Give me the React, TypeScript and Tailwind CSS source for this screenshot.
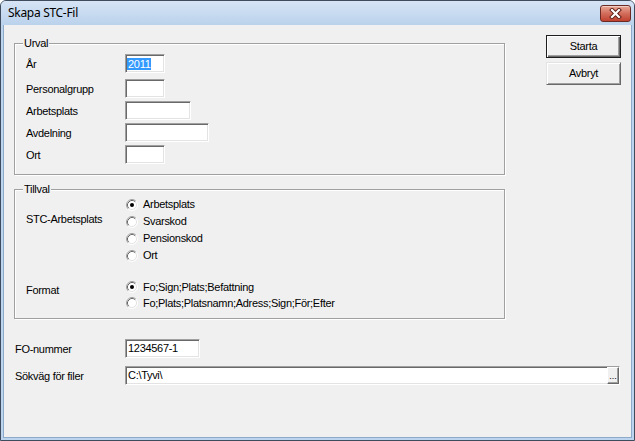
import React from "react";

const txt = "font-['Liberation_Sans',Arial,sans-serif] text-[11px] tracking-[-0.3px] leading-[13px] text-black";

function Sunken({ w, children }: { w: string; children?: React.ReactNode }) {
  return (
    <div
      className={`${w} h-[19px] bg-white border border-t-[#a0a0a0] border-l-[#a0a0a0] border-b-white border-r-white shadow-[inset_1px_1px_0_#696969,inset_-1px_-1px_0_#e3e3e3] flex items-center pl-[2px] overflow-hidden`}
    >
      {children}
    </div>
  );
}

function RadioIcon({ checked }: { checked?: boolean }) {
  return (
    <svg width="12" height="12" viewBox="0 0 12 12" className="shrink-0">
      <circle cx="6" cy="6" r="5" fill="#ffffff" />
      <path d="M2.11 9.89 A5.5 5.5 0 0 1 9.89 2.11" fill="none" stroke="#a0a0a0" />
      <path d="M9.89 2.11 A5.5 5.5 0 0 1 2.11 9.89" fill="none" stroke="#ffffff" />
      <path d="M2.82 9.18 A4.5 4.5 0 0 1 9.18 2.82" fill="none" stroke="#696969" />
      <path d="M9.18 2.82 A4.5 4.5 0 0 1 2.82 9.18" fill="none" stroke="#e3e3e3" />
      {checked && <circle cx="6" cy="6" r="2" fill="#000000" />}
    </svg>
  );
}

function Radio({ label, checked, h }: { label: string; checked?: boolean; h: string }) {
  return (
    <div className={`${h} flex items-center pl-[1px]`}>
      <RadioIcon checked={checked} />
      <span className="ml-[5px] whitespace-nowrap">{label}</span>
    </div>
  );
}

function Group({ title, h, children }: { title: string; h: string; children: React.ReactNode }) {
  return (
    <div
      className={`relative ${h} border border-[#a0a0a0] shadow-[inset_1px_1px_0_#ffffff,1px_1px_0_#ffffff]`}
    >
      <span className="absolute -top-[7px] left-[8px] px-[1px] bg-[#f0f0f0] leading-[13px]">{title}</span>
      {children}
    </div>
  );
}

function FieldRow({ label, children, mt }: { label: string; children: React.ReactNode; mt: string }) {
  return (
    <div className={`flex items-center ${mt}`}>
      <div className="w-[99px] pt-[2px]">{label}</div>
      {children}
    </div>
  );
}

export default function App() {
  return (
    <div className="w-[635px] h-[441px] bg-white">
      <div className="w-[635px] h-[441px] rounded-t-[6px] border border-[#3e4c5e] bg-[#bcd4ee] flex flex-col overflow-hidden">
        {/* title bar */}
        <div className="h-[24px] shrink-0 flex items-start justify-between bg-linear-to-b from-[#d6e4f5] to-[#bad2ec] pl-[7px] pr-[3px]">
          <span className="mt-[4px] font-['Noto_Sans',sans-serif] text-[12px] leading-[16px] tracking-[-0.3px] text-black">
            Skapa STC-Fil
          </span>
          <div className="mt-[4px] w-[31px] h-[17px] rounded-[3px] border border-[#6b2a23] bg-linear-to-b from-[#e8a796] via-[#d26d5c] to-[#c0402f] shadow-[inset_0_1px_0_rgba(255,255,255,0.45)] flex items-center justify-center">
            <svg width="13" height="11" viewBox="0 0 13 11">
              <path d="M3 2 L10 9 M10 2 L3 9" stroke="#5a1a12" strokeWidth="4" strokeLinecap="square" fill="none" />
              <path d="M3 2 L10 9 M10 2 L3 9" stroke="#ffffff" strokeWidth="2.2" strokeLinecap="square" fill="none" />
            </svg>
          </div>
        </div>

        {/* client area */}
        <div className={`flex-1 mx-[2px] mb-[2px] border-l border-r border-b border-[#8eaacb] bg-[#f0f0f0] pt-[10px] ${txt}`}>
          <div className="flex items-start pl-[10px]">
            {/* left column */}
            <div className="w-[491px] mt-[8px] flex flex-col">
              <Group title="Urval" h="h-[132px]">
                <div className="pl-[11px] pt-[10px] flex flex-col">
                  <FieldRow label="År" mt="mt-0">
                    <Sunken w="w-[40px]">
                      <span className="-ml-[1px] px-[1px] bg-[#3399ff] text-white leading-[12px]">2011</span>
                    </Sunken>
                  </FieldRow>
                  <FieldRow label="Personalgrupp" mt="mt-[6px]">
                    <Sunken w="w-[40px]" />
                  </FieldRow>
                  <FieldRow label="Arbetsplats" mt="mt-[3px]">
                    <Sunken w="w-[66px]" />
                  </FieldRow>
                  <FieldRow label="Avdelning" mt="mt-[3px]">
                    <Sunken w="w-[84px]" />
                  </FieldRow>
                  <FieldRow label="Ort" mt="mt-[3px]">
                    <Sunken w="w-[40px]" />
                  </FieldRow>
                </div>
              </Group>

              <div className="mt-[14px]">
                <Group title="Tillval" h="h-[130px]">
                  <div className="pl-[11px] pt-[6px]">
                    <div className="flex">
                      <div className="w-[99px] pt-[17px]">STC-Arbetsplats</div>
                      <div className="flex flex-col">
                        <Radio label="Arbetsplats" checked h="h-[17px]" />
                        <Radio label="Svarskod" h="h-[17px]" />
                        <Radio label="Pensionskod" h="h-[17px]" />
                        <Radio label="Ort" h="h-[17px]" />
                      </div>
                    </div>
                    <div className="flex mt-[15px]">
                      <div className="w-[99px] pt-[5px]">Format</div>
                      <div className="flex flex-col">
                        <Radio label="Fo;Sign;Plats;Befattning" checked h="h-[16px]" />
                        <Radio label="Fo;Plats;Platsnamn;Adress;Sign;För;Efter" h="h-[16px]" />
                      </div>
                    </div>
                  </div>
                </Group>
              </div>
            </div>

            {/* buttons */}
            <div className="ml-[41px] flex flex-col gap-[4px]">
              <div className="w-[75px] h-[23px] border border-[#1e1e1e] bg-[#f0f0f0] shadow-[inset_1px_1px_0_#ffffff,inset_-1px_-1px_0_#696969,inset_-2px_-2px_0_#a0a0a0] flex items-center justify-center">
                Starta
              </div>
              <div className="w-[75px] h-[23px] border border-t-[#e3e3e3] border-l-[#e3e3e3] border-b-[#696969] border-r-[#696969] bg-[#f0f0f0] shadow-[inset_1px_1px_0_#ffffff,inset_-1px_-1px_0_#a0a0a0] flex items-center justify-center">
                Avbryt
              </div>
            </div>
          </div>

          {/* bottom fields */}
          <div className="pl-[11px] mt-[20px] flex flex-col">
            <div className="flex items-center">
              <div className="w-[110px] pt-[2px]">FO-nummer</div>
              <Sunken w="w-[75px]">1234567-1</Sunken>
            </div>
            <div className="flex items-center mt-[8px]">
              <div className="w-[110px] pt-[2px]">Sökväg för filer</div>
              <div className="w-[495px] h-[19px] bg-white border border-t-[#a0a0a0] border-l-[#a0a0a0] border-b-white border-r-white shadow-[inset_1px_1px_0_#696969,inset_-1px_-1px_0_#e3e3e3] flex items-center">
                <span className="flex-1 pl-[2px]">C:\Tyvi\</span>
                <div className="w-[12px] h-[17px] border border-t-[#ffffff] border-l-[#ffffff] border-b-[#696969] border-r-[#696969] bg-[#f0f0f0] shadow-[inset_-1px_-1px_0_#a0a0a0] flex items-end justify-center pb-[2px] text-[9px] leading-[9px] tracking-[0px]">
                  ...
                </div>
              </div>
            </div>
          </div>
        </div>
      </div>
    </div>
  );
}
